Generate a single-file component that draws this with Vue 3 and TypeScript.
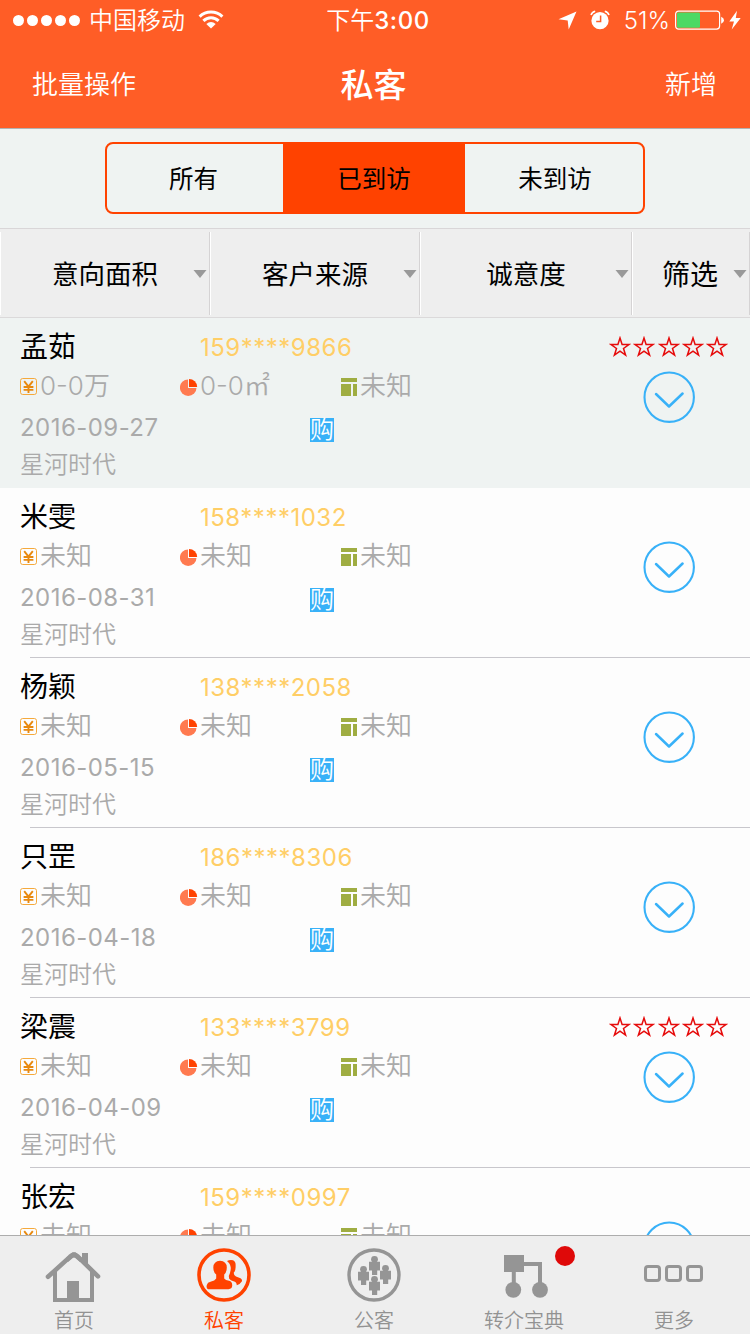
<script setup lang="ts">
interface Customer {
  name: string
  phone: string
  budget: string
  area: string
  layout: string
  date: string
  rated: boolean
}

const unknown = '未知'
const customers: Customer[] = [
  { name: '孟茹', phone: '159****9866', budget: '0-0万', area: '0-0㎡', layout: unknown, date: '2016-09-27', rated: true },
  { name: '米雯', phone: '158****1032', budget: unknown, area: unknown, layout: unknown, date: '2016-08-31', rated: false },
  { name: '杨颖', phone: '138****2058', budget: unknown, area: unknown, layout: unknown, date: '2016-05-15', rated: false },
  { name: '只罡', phone: '186****8306', budget: unknown, area: unknown, layout: unknown, date: '2016-04-18', rated: false },
  { name: '梁震', phone: '133****3799', budget: unknown, area: unknown, layout: unknown, date: '2016-04-09', rated: true },
  { name: '张宏', phone: '159****0997', budget: unknown, area: unknown, layout: unknown, date: '', rated: false },
]
const segments = ['所有', '已到访', '未到访']
const filters = ['意向面积', '客户来源', '诚意度', '筛选']
</script>

<template>
  <div class="screen">
    <header class="top">
      <div class="status">
        <div class="carrier">
          <svg class="dots" width="68" height="12" viewBox="0 0 68 12" fill="#fff">
            <circle v-for="n in 5" :key="n" :cx="n * 14 - 8.5" cy="6.5" r="5.5" />
          </svg>
          <span class="carrier-name">中国移动</span>
          <svg class="wifi" width="26" height="20" viewBox="0 0 26 20" fill="none" stroke="#fff" stroke-width="3">
            <path d="M1.6 6.6A16.4 16.4 0 0 1 24.4 6.6" />
            <path d="M5.4 10.8A10.9 10.9 0 0 1 20.6 10.8" />
            <path d="M13 18.5L8.3 13.9Q13 10.3 17.7 13.9Z" fill="#fff" stroke="none" />
          </svg>
        </div>
        <div class="clock"><span>下午</span><b>3:00</b></div>
        <div class="indicators">
          <svg class="location" width="19" height="19" viewBox="0 0 19 19"><path d="M18.5.5L10.7 18.5L9.7 9.4L.5 8.3Z" fill="#fff" /></svg>
          <svg class="alarm" width="20" height="20" viewBox="0 0 20 20">
            <circle cx="10" cy="10.7" r="8.6" fill="#fff" />
            <path d="M1 5Q2 2 5.2 1.2M19 5Q18 2 14.8 1.2" fill="none" stroke="#fff" stroke-width="1.6" />
            <path d="M10.6 5.4V11.6H6.2" fill="none" stroke="#ff5d26" stroke-width="1.5" />
          </svg>
          <span class="percent">51%</span>
          <svg class="battery" width="50" height="20" viewBox="0 0 50 20">
            <rect x=".6" y="1.1" width="44" height="18" rx="3" fill="none" stroke="#fff" stroke-width="1.2" />
            <rect x="2" y="2.5" width="23" height="15.2" rx="1.2" fill="#4cd964" />
            <path d="M46.2 6.7Q49 7.8 49 10.2T46.2 13.7Z" fill="#fff" />
          </svg>
          <svg class="bolt" width="12" height="20" viewBox="0 0 12 20"><path d="M8 .8L.3 11.5H5L2.7 19.5L11.7 8.1H6.8Z" fill="#fff" /></svg>
        </div>
      </div>
      <nav class="bar">
        <span class="bar-action">批量操作</span>
        <h1>私客</h1>
        <span class="bar-action right">新增</span>
      </nav>
    </header>

    <section class="segment-area">
      <div class="segmented">
        <div v-for="(s, i) in segments" :key="s" class="segment" :class="{ selected: i === 1 }">{{ s }}</div>
      </div>
    </section>

    <section class="filters">
      <div v-for="f in filters" :key="f" class="filter">
        <span>{{ f }}</span>
        <svg width="14" height="9" viewBox="0 0 14 9"><path d="M.5 1H13.5L7 9Z" fill="#999" /></svg>
      </div>
    </section>

    <main class="list">
      <article v-for="(c, i) in customers" :key="c.name" class="row" :class="{ active: i === 0 }">
        <div class="details">
          <div class="line">
            <span class="name">{{ c.name }}</span>
            <span class="phone">{{ c.phone }}</span>
          </div>
          <div class="line facts">
            <span class="fact">
              <svg width="20" height="20" viewBox="0 0 20 20" fill="none">
                <rect x=".5" y="1.5" width="16" height="16" rx="2.2" stroke="#f5a93b" />
                <path d="M4.2 4.2L8.5 9.6L12.8 4.2M8.5 9.3V16M3.6 10H13.4M3.6 12.9H13.4" stroke="#e8890f" stroke-width="1.9" />
              </svg>
              <span>{{ c.budget }}</span>
            </span>
            <span class="fact">
              <svg width="20" height="20" viewBox="0 0 20 20">
                <circle cx="8.2" cy="10.7" r="8.3" fill="#ff7a50" />
                <path d="M8 1V11H18V9A8.5 8.5 0 0 0 9 1Z" :fill="i === 0 ? '#eff3f2' : '#fdfdfd'" />
                <path d="M9 2V10H17.2A8.2 8.2 0 0 0 9 2Z" fill="#ff4200" />
              </svg>
              <span>{{ c.area }}</span>
            </span>
            <span class="fact">
              <svg width="20" height="20" viewBox="0 0 20 20" fill="#9fad42"><path d="M1 1H17V5H1ZM1 7H11V19H1ZM13 7H17V19H13Z" /></svg>
              <span>{{ c.layout }}</span>
            </span>
          </div>
          <template v-if="c.date">
            <div class="line">
              <span class="date">{{ c.date }}</span>
              <span class="tag">购</span>
            </div>
            <div class="place">星河时代</div>
          </template>
        </div>
        <div class="side">
          <div class="stars">
            <template v-if="c.rated">
              <svg v-for="n in 5" :key="n" width="22" height="22" viewBox="0 0 22 22" fill="none" stroke="#e60b0b" stroke-width="1.5">
                <path d="M11 2L13.1 8.4L20 8.5L14.5 12.5L16.6 19.2L11 15.2L5.4 19.2L7.5 12.5L2 8.5L8.9 8.4Z" />
              </svg>
            </template>
          </div>
          <svg class="expand" width="52" height="52" viewBox="0 0 52 52" fill="none" stroke="#38b1f8" stroke-width="2.1" stroke-linecap="round">
            <circle cx="26.2" cy="26.2" r="24.7" />
            <path d="M13 23L26 35.5L39.6 22.5" stroke-width="2.5" stroke-linejoin="round" />
          </svg>
        </div>
      </article>
    </main>

    <footer class="tabs">
      <div class="tab">
        <svg width="60" height="60" viewBox="0 0 60 60" fill="#959595">
          <path d="M4 32.8L26.2 12.6Q30 9.4 33.8 12.6L54 32.4" fill="none" stroke="#959595" stroke-width="4.6" stroke-linecap="round" stroke-linejoin="round" />
          <path d="M38 9H44V21L38 16ZM9 27L13 23V54H46V23L50 27V58H9Z" />
          <path d="M22 14L28.5 8.3H31.5L38 14L36 18L30 13L24 18Z" />
          <rect x="23" y="37" width="12" height="18" />
        </svg>
        <span>首页</span>
      </div>
      <div class="tab current">
        <svg width="60" height="60" viewBox="0 0 60 60" fill="#ff4200">
          <circle cx="30" cy="31" r="25" fill="none" stroke="#ff4200" stroke-width="3.6" />
          <path d="M33 17Q35.5 15.6 39 16.2Q42 17.3 41.6 22Q41.9 26.5 39.8 28.5Q39.6 31.5 42 32.6L46.5 34.3Q48.6 35.8 47.8 37.5Q46 40.3 42.8 41.3Q42.6 38 39.5 37.3Q36.4 36.3 35.2 34.8L34.8 32Q36.6 28.5 36.8 24Q36.4 19.5 33 17Z" />
          <path d="M26 16.8Q32.7 17.2 32.8 23.5Q32.7 28.5 30.2 30.5V34.4Q31.5 36 35 36.7Q38.5 37.5 38.2 41.8Q38 45 34.5 45.2H14Q12 44.5 12.8 41Q13.5 38.3 16.5 37.7Q21 36.5 22.2 34.4V30.5Q19.4 28.5 19.3 23.5Q19.5 17.2 26 16.8Z" />
        </svg>
        <span>私客</span>
      </div>
      <div class="tab">
        <svg width="60" height="60" viewBox="0 0 60 60" fill="#959595">
          <circle cx="30" cy="31" r="25" fill="none" stroke="#959595" stroke-width="3.4" />
          <g v-for="p in [[30.5, 12], [19.5, 22], [41.5, 21], [30.5, 32]]" :key="p.join()" :transform="`translate(${p[0]} ${p[1]})`">
            <circle cx="0" cy="3.3" r="3.4" />
            <path d="M-5.5 5.8H5.5V14.4H2.7V19H-2.5V14.4H-5.5Z" />
          </g>
        </svg>
        <span>公客</span>
      </div>
      <div class="tab">
        <svg width="60" height="60" viewBox="0 0 60 60" fill="#959595">
          <path d="M19.8 20V44M28 20H46V44" fill="none" stroke="#959595" stroke-width="4" />
          <rect x="10" y="11" width="20" height="17" />
          <circle cx="19.3" cy="45.8" r="7.9" />
          <circle cx="46" cy="45.8" r="7.9" />
        </svg>
        <span>转介宝典</span>
        <i class="unread" />
      </div>
      <div class="tab">
        <svg width="60" height="60" viewBox="0 0 60 60" fill="none" stroke="#959595" stroke-width="3">
          <rect v-for="x in [1.5, 22.5, 43.5]" :key="x" :x="x" y="22.5" width="14" height="14" rx="2.5" />
        </svg>
        <span>更多</span>
      </div>
    </footer>
  </div>
</template>

<style>
body {
  margin: 0;
}
</style>

<style scoped>
.screen {
  position: relative;
  display: flex;
  flex-direction: column;
  width: 750px;
  height: 1334px;
  overflow: hidden;
  box-sizing: border-box;
  background: #fdfdfd;
  font-family: Inter, "Noto Sans CJK SC", sans-serif;
  font-weight: 350;
  color: #000;
}
.top {
  height: 128px;
  flex: none;
  background: #ff5d26;
  color: #fff;
  border-bottom: 1px solid #b2b2b2;
}
.status {
  display: grid;
  grid-template-columns: 1fr 200px 1fr;
  height: 40px;
  align-items: center;
}
.carrier {
  display: flex;
  align-items: center;
  padding-left: 13px;
}
.carrier-name {
  margin-left: 8px;
  font-size: 24px;
  line-height: 42px;
  height: 40px;
}
.wifi {
  margin-left: 13px;
}
.clock {
  display: flex;
  justify-content: center;
  height: 40px;
  font-size: 24px;
  line-height: 42px;
  padding-left: 6px;
}
.clock b {
  font-weight: 500;
  letter-spacing: 0.6px;
}
.indicators {
  display: flex;
  align-items: center;
  justify-content: flex-end;
  padding-right: 9px;
}
.alarm {
  margin-left: 13px;
}
.percent {
  height: 40px;
  line-height: 41px;
  margin-left: 14px;
  font-size: 24px;
}
.battery {
  margin-left: 5px;
}
.bolt {
  margin-left: 4px;
}
.bar {
  display: grid;
  grid-template-columns: 1fr 200px 1fr;
  align-items: center;
  height: 88px;
  padding: 0 33px 0 32px;
}
.bar-action {
  font-size: 26px;
  line-height: 30px;
  padding-top: 1px;
}
.right {
  text-align: right;
}
h1 {
  margin: 0;
  padding: 1px 2px 0 0;
  text-align: center;
  font-size: 33px;
  line-height: 40px;
  font-weight: 500;
}
.segment-area {
  flex: none;
  height: 99px;
  background: #eff3f2;
  display: flex;
  justify-content: center;
  align-items: flex-start;
  box-sizing: border-box;
  padding-top: 13px;
}
.segmented {
  display: grid;
  grid-template-columns: 176px 182px 178px;
  width: 540px;
  height: 72px;
  box-sizing: border-box;
  border: 2px solid #ff4200;
  border-radius: 8px;
  overflow: hidden;
}
.segment {
  line-height: 71px;
  text-align: center;
  font-size: 24.5px;
  font-weight: 400;
}
.segment:first-child {
  padding-right: 3px;
}
.segment:last-child {
  padding-left: 2px;
}
.selected {
  background: #ff4200;
}
.filters {
  flex: none;
  display: grid;
  grid-template-columns: 210px 210px 212px 118px;
  height: 90px;
  box-sizing: border-box;
  border-top: 1px solid #d9d6d8;
  border-bottom: 1px solid #dbd9da;
  background: #eee;
  padding: 3px 0 2px;
}
.filter {
  display: flex;
  align-items: center;
  box-sizing: border-box;
  border-left: 1px solid #fff;
  border-right: 1px solid #d5d3d4;
  font-size: 26.5px;
  font-weight: 400;
}
.filter span {
  flex: 1;
  text-align: center;
  padding: 0 0 2px 16px;
}
.filter:last-child {
  font-size: 28px;
}
.filter:last-child span {
  padding-left: 14px;
}
.filter svg {
  margin-right: 2px;
}
.list {
  flex: 1;
  overflow: hidden;
}
.row {
  height: 170px;
  display: flex;
  justify-content: space-between;
  box-sizing: border-box;
  padding: 9px 0 0 20px;
  background: linear-gradient(#c8c7cc, #c8c7cc) 30px 100% / 720px 1px no-repeat;
}
.row.active {
  background: #eff3f2;
}
.details {
  width: 480px;
}
.line {
  display: flex;
  height: 40px;
  line-height: 41px;
}
.name {
  width: 180px;
  font-size: 28px;
  font-weight: 400;
}
.phone {
  font-size: 24px;
  letter-spacing: 0.5px;
  color: #ffce66;
  font-weight: 370;
}
.fact {
  display: flex;
  align-items: center;
  width: 160px;
  font-size: 26px;
  color: #aaa;
}
.fact span {
  line-height: 38px;
  padding-bottom: 2px;
}
.date {
  width: 290px;
  font-size: 24px;
  letter-spacing: 0.45px;
  color: #aaa;
  font-weight: 370;
}
.tag {
  width: 24px;
  height: 24px;
  margin-top: 11px;
  background: #38b1f8;
  color: #fff;
  font-size: 24px;
  line-height: 24px;
}
.place {
  font-size: 24px;
  line-height: 36px;
  color: #aaa;
}
.side {
  width: 141px;
}
.stars {
  display: flex;
  gap: 2.3px;
  height: 44px;
  padding-top: 8.5px;
  box-sizing: border-box;
}
.expand {
  display: block;
  margin-left: 34px;
}
.tabs {
  flex: none;
  display: grid;
  grid-template-columns: repeat(5, 150px);
  height: 99px;
  box-sizing: border-box;
  border-top: 1px solid #adadad;
  background: #eee;
}
.tab {
  position: relative;
  display: flex;
  flex-direction: column;
  align-items: center;
  color: #929292;
  font-size: 20px;
  padding: 8px 2px 0 0;
}
.tab span {
  line-height: 30px;
  padding-top: 1.5px;
}
.tab.current {
  color: #ff4200;
}
.unread {
  position: absolute;
  left: 105px;
  top: 10px;
  width: 20px;
  height: 20px;
  border-radius: 50%;
  background: #df0909;
}
</style>
